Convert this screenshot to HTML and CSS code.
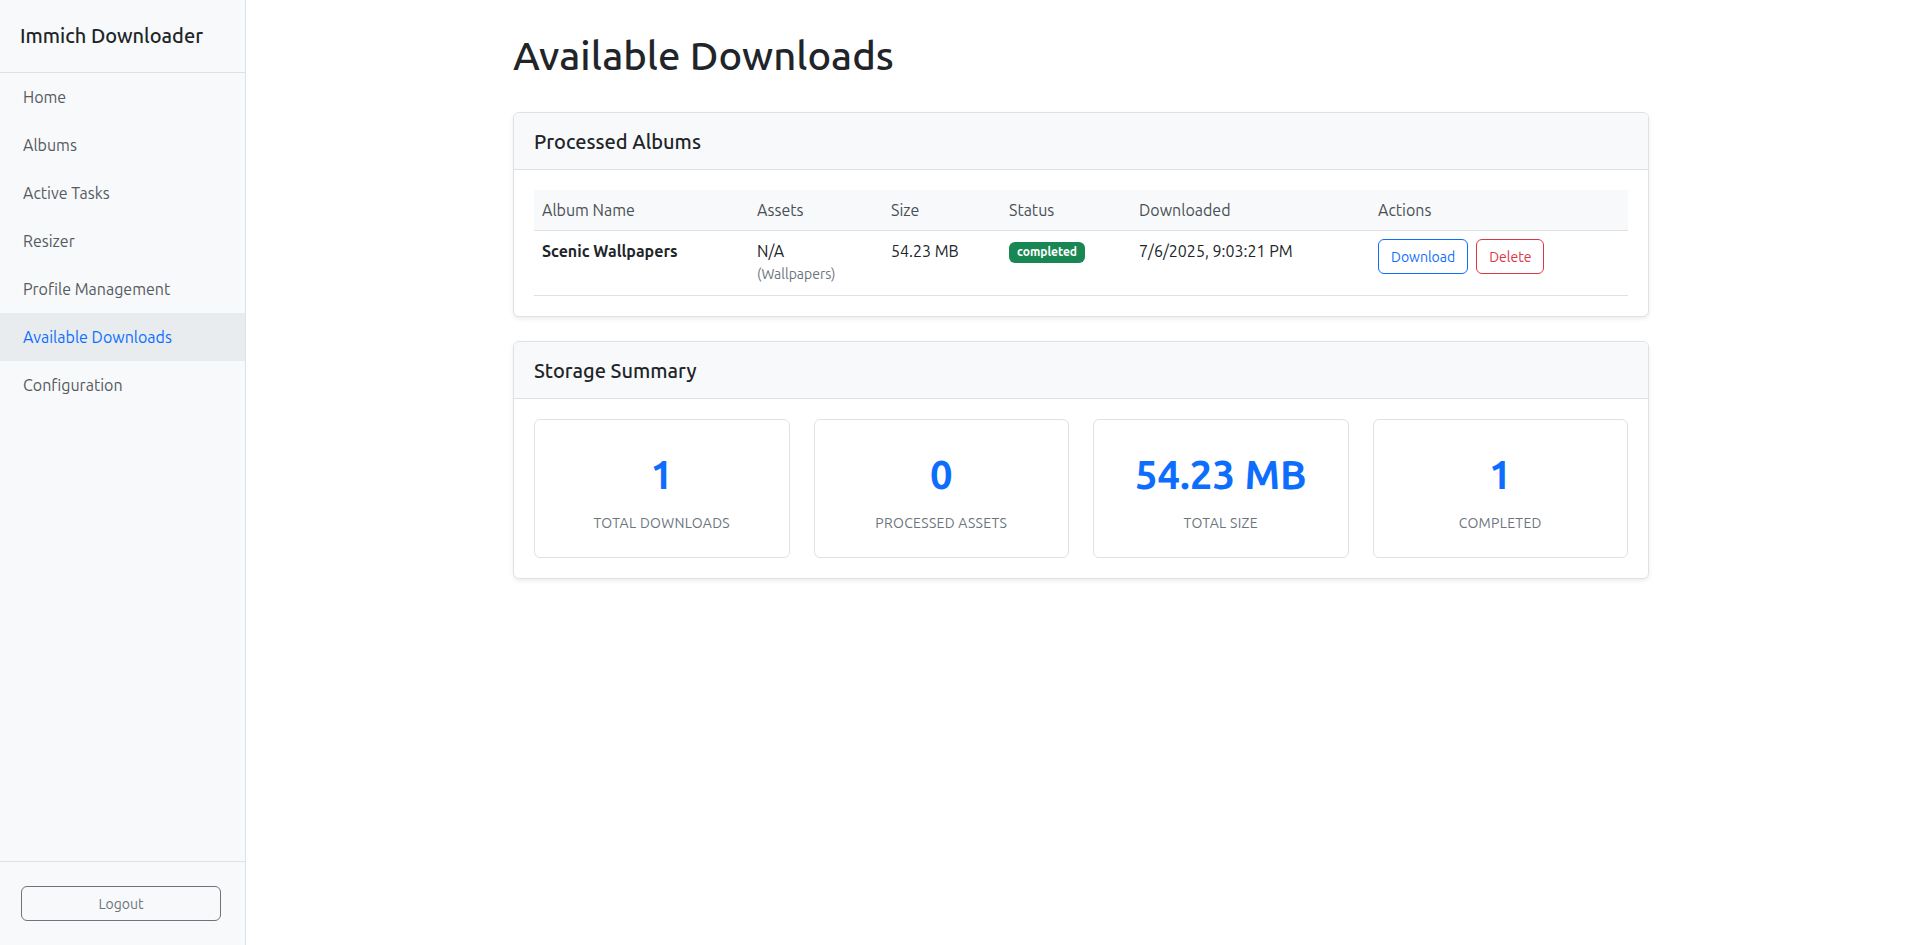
FILE: index.html
```html
<!DOCTYPE html>
<html lang="en">
<head>
<meta charset="utf-8">
<title>Immich Downloader</title>
<link rel="stylesheet" href="styles.css">
</head>
<body>
<div class="app">
  <aside class="sidebar">
    <div class="brand">Immich Downloader</div>
    <nav class="nav">
      <a class="nav-link" href="#">Home</a>
      <a class="nav-link" href="#">Albums</a>
      <a class="nav-link" href="#">Active Tasks</a>
      <a class="nav-link" href="#">Resizer</a>
      <a class="nav-link" href="#">Profile Management</a>
      <a class="nav-link active" href="#">Available Downloads</a>
      <a class="nav-link" href="#">Configuration</a>
    </nav>
    <div class="sidebar-footer">
      <button class="btn btn-outline-secondary btn-block">Logout</button>
    </div>
  </aside>
  <main class="main">
    <div class="container">
      <h1 class="page-title">Available Downloads</h1>

      <section class="card">
        <div class="card-header"><h5 class="card-title">Processed Albums</h5></div>
        <div class="card-body">
          <table class="table">
            <colgroup>
              <col class="c-name"><col class="c-assets"><col class="c-size"><col class="c-status"><col class="c-date"><col class="c-actions">
            </colgroup>
            <thead>
              <tr>
                <th>Album Name</th>
                <th>Assets</th>
                <th>Size</th>
                <th>Status</th>
                <th>Downloaded</th>
                <th>Actions</th>
              </tr>
            </thead>
            <tbody>
              <tr>
                <td><strong>Scenic Wallpapers</strong></td>
                <td>N/A<small class="muted">(Wallpapers)</small></td>
                <td>54.23 MB</td>
                <td><span class="badge">completed</span></td>
                <td>7/6/2025, 9:03:21 PM</td>
                <td>
                  <div class="actions">
                    <button class="btn btn-outline-primary">Download</button>
                    <button class="btn btn-outline-danger">Delete</button>
                  </div>
                </td>
              </tr>
            </tbody>
          </table>
        </div>
      </section>

      <section class="card">
        <div class="card-header"><h5 class="card-title">Storage Summary</h5></div>
        <div class="card-body">
          <div class="stats">
            <div class="stat">
              <div class="stat-value">1</div>
              <div class="stat-label">Total Downloads</div>
            </div>
            <div class="stat">
              <div class="stat-value">0</div>
              <div class="stat-label">Processed Assets</div>
            </div>
            <div class="stat">
              <div class="stat-value">54.23 MB</div>
              <div class="stat-label">Total Size</div>
            </div>
            <div class="stat">
              <div class="stat-value">1</div>
              <div class="stat-label">Completed</div>
            </div>
          </div>
        </div>
      </section>
    </div>
  </main>
</div>
</body>
</html>
```

FILE: styles.css
```css
* { box-sizing: border-box; }

html, body {
  margin: 0;
  padding: 0;
  height: 100%;
}

body {
  font-family: "Ubuntu", "Noto Sans", "DejaVu Sans", sans-serif;
  font-size: 16px;
  line-height: 1.5;
  color: #212529;
  background: #fff;
}

.app {
  display: flex;
  height: 945px;
}

/* Sidebar */
.sidebar {
  width: 246px;
  flex: 0 0 246px;
  background: #f8f9fa;
  border-right: 1px solid #dee2e6;
  display: flex;
  flex-direction: column;
}

.brand {
  height: 73px;
  padding: 24px 20px;
  font-size: 20px;
  line-height: 24px;
  font-weight: 500;
  color: #212529;
  border-bottom: 1px solid #dee2e6;
}

.nav {
  display: flex;
  flex-direction: column;
  flex: 1;
}

.nav-link {
  display: block;
  height: 48px;
  padding: 12px 23px;
  color: #545b62;
  text-decoration: none;
  font-size: 16px;
  line-height: 24px;
}

.nav-link.active {
  background: #e9ecef;
  color: #0d6efd;
}

.sidebar-footer {
  border-top: 1px solid #dee2e6;
  padding: 24px 24px 24px 21px;
}

/* Buttons */
.btn {
  display: inline-block;
  font-family: inherit;
  font-size: 14px;
  line-height: 21px;
  padding: 7px 12px 5px;
  border-radius: 6px;
  background: transparent;
  border: 1px solid;
  cursor: pointer;
}

.btn-block {
  display: block;
  width: 100%;
}

.btn-outline-secondary {
  color: #6c757d;
  border-color: #6c757d;
}

.btn-outline-primary {
  color: #0d6efd;
  border-color: #0d6efd;
}

.btn-outline-danger {
  color: #dc3545;
  border-color: #dc3545;
}

/* Main */
.main {
  flex: 1;
  padding: 32px 0 0 4px;
  overflow: hidden;
}

.container {
  width: 1136px;
  margin: 0 auto;
}

.page-title {
  margin: 0 0 32px;
  font-size: 40px;
  line-height: 48px;
  font-weight: 500;
  color: #212529;
}

.card {
  background: #fff;
  border: 1px solid #dee2e6;
  border-radius: 6px;
  box-shadow: 0 2px 4px rgba(0, 0, 0, 0.075);
  margin-bottom: 24px;
  overflow: hidden;
}

.card-header {
  background: #f8f9fa;
  border-bottom: 1px solid #dee2e6;
  padding: 17px 20px 15px;
}

.card-title {
  margin: 0;
  font-size: 20px;
  line-height: 24px;
  font-weight: 500;
}

.card-body {
  padding: 20px;
}

/* Table */
.table {
  width: 100%;
  border-collapse: collapse;
  table-layout: fixed;
}

.c-name { width: 215px; }
.c-assets { width: 134px; }
.c-size { width: 118px; }
.c-status { width: 130px; }
.c-date { width: 239px; }
.c-actions { width: 258px; }

.table th {
  background: #f8f9fa;
  color: #495057;
  font-weight: 400;
  text-align: left;
  padding: 8px;
  line-height: 24px;
  border-bottom: 1px solid #dee2e6;
}

.table td {
  padding: 8px 8px 10px;
  vertical-align: top;
  line-height: 24px;
  border-bottom: 1px solid #dee2e6;
  color: #212529;
}

.table td strong {
  font-weight: 700;
}

.muted {
  display: block;
  font-size: 14px;
  line-height: 22px;
  color: #6c757d;
}

.badge {
  display: inline-block;
  margin-top: 3px;
  background: #198754;
  color: #fff;
  font-size: 12px;
  font-weight: 700;
  line-height: 12px;
  padding: 4px 8px 5px;
  border-radius: 6px;
  vertical-align: top;
}

.actions {
  display: flex;
  gap: 8px;
}

/* Stats */
.stats {
  display: grid;
  grid-template-columns: repeat(4, 1fr);
  gap: 24px;
}

.stat {
  border: 1px solid #dee2e6;
  border-radius: 6px;
  text-align: center;
  padding: 31px 16px 23px;
  height: 139px;
}

.stat-value {
  font-size: 40px;
  line-height: 48px;
  font-weight: 700;
  color: #0d6efd;
  margin-bottom: 14px;
}

.stat-label {
  font-size: 14px;
  line-height: 21px;
  color: #6c757d;
  text-transform: uppercase;
  letter-spacing: 0.3px;
}
```
